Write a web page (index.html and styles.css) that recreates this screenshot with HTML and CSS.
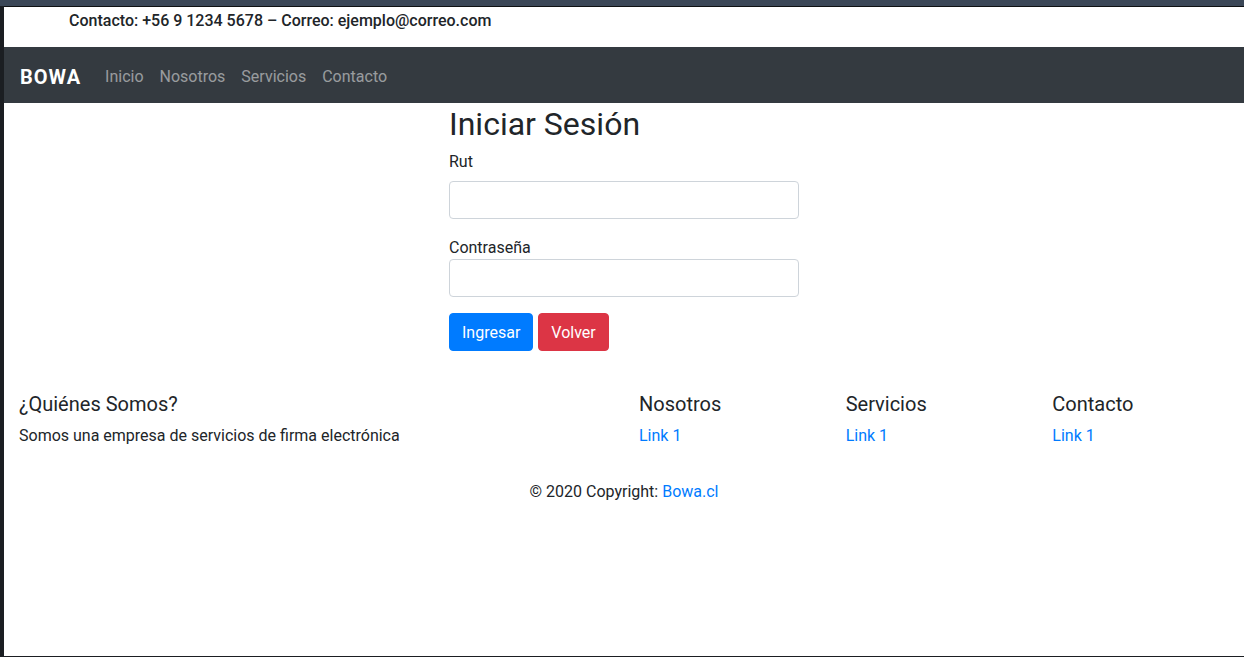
FILE: index.html
```html
<!DOCTYPE html>
<html lang="es">
<head>
    <meta charset="UTF-8">
    <meta name="viewport" content="width=device-width, initial-scale=1.0">
    <title>BOWA - Iniciar Sesión</title>
    <link rel="stylesheet" href="styles.css">
</head>
<body>
<div class="page">
    <!-- barra de contacto -->
    <div class="container">
        <p class="contact-line">Contacto: +56 9 1234 5678 – Correo: ejemplo@correo.com</p>
    </div>

    <nav class="navbar">
        <a class="navbar-brand" href="#">BOWA</a>
        <ul class="nav-list">
            <li><a class="nav-link" href="#">Inicio</a></li>
            <li><a class="nav-link" href="#">Nosotros</a></li>
            <li><a class="nav-link" href="#">Servicios</a></li>
            <li><a class="nav-link" href="#">Contacto</a></li>
        </ul>
    </nav>

    <!-- formulario -->
    <div class="container">
        <div class="row">
            <div class="login-col">
                <h2 class="login-title">Iniciar Sesión</h2>
                <form class="login-form" onsubmit="return false;">
                    <div class="form-group">
                        <label class="form-label" for="rut">Rut</label>
                        <input type="text" id="rut" class="form-control">
                    </div>
                    <label class="form-label flush" for="pass">Contraseña</label>
                    <input type="password" id="pass" class="form-control">
                    <div class="form-actions">
                        <button type="submit" class="btn btn-primary">Ingresar</button>
                        <button type="button" class="btn btn-danger">Volver</button>
                    </div>
                </form>
            </div>
        </div>
    </div>

    <!-- pie de página -->
    <footer class="page-footer">
        <div class="footer-fluid">
            <div class="row">
                <div class="col-half">
                    <h5 class="footer-title">¿Quiénes Somos?</h5>
                    <p class="footer-text">Somos una empresa de servicios de firma electrónica</p>
                </div>
                <div class="col-sixth">
                    <h5 class="footer-title">Nosotros</h5>
                    <ul class="link-list">
                        <li><a href="#">Link 1</a></li>
                    </ul>
                </div>
                <div class="col-sixth">
                    <h5 class="footer-title">Servicios</h5>
                    <ul class="link-list">
                        <li><a href="#">Link 1</a></li>
                    </ul>
                </div>
                <div class="col-sixth">
                    <h5 class="footer-title">Contacto</h5>
                    <ul class="link-list">
                        <li><a href="#">Link 1</a></li>
                    </ul>
                </div>
            </div>
        </div>
        <div class="copyright">© 2020 Copyright: <a href="#">Bowa.cl</a></div>
    </footer>
</div>
</body>
</html>
```

FILE: styles.css
```css
* { box-sizing: border-box; }
body {
    margin: 0;
    background: #1b1e22;
    border-top: 6px solid #3b4757;
    font-family: -apple-system, BlinkMacSystemFont, "Segoe UI", Roboto, "Helvetica Neue", Arial, "Noto Sans", sans-serif;
    font-size: 16px;
    line-height: 1.5;
    color: #212529;
}
a { color: #007bff; text-decoration: none; }
ul { margin: 0; padding: 0; list-style: none; }
h2, h5, p { margin: 0; }

.page {
    margin-left: 4px;
    background: #fff;
    border-top: 1px solid #0f1113;
    min-height: calc(100vh - 7px);
}
.container {
    max-width: 1140px;
    margin: 0 auto;
    padding: 0 15px;
}
.row { display: flex; margin: 0 -15px; }

/* contacto */
.contact-line {
    font-weight: 500;
    padding-top: 2px;
    margin-bottom: 14px;
}

/* navbar */
.navbar {
    background: #343a40;
    display: flex;
    align-items: center;
    padding: 8px 16px;
}
.navbar-brand {
    color: #fff;
    font-size: 20px;
    font-weight: 700;
    letter-spacing: 1px;
    line-height: 30px;
    padding: 7px 0 3px;
    margin-right: 16px;
}
.nav-list { display: flex; }
.nav-link {
    display: block;
    padding: 10px 8px 6px;
    color: rgba(255, 255, 255, 0.5);
}

/* login */
.login-col {
    flex: 0 0 33.3333%;
    max-width: 33.3333%;
    margin-left: 33.3333%;
    padding: 0 15px;
}
.login-title {
    font-size: 32px;
    font-weight: 400;
    line-height: 1.2;
    padding-top: 2px;
    margin-bottom: 6px;
}
.login-form { margin-bottom: 17px; }
.form-group { margin-bottom: 16px; }
.form-label { display: block; padding-top: 1px; margin-bottom: 7px; }
.form-label.flush { margin-bottom: -1px; }
.form-control {
    display: block;
    width: 100%;
    height: 38px;
    padding: 6px 12px;
    font: inherit;
    color: #495057;
    background: #fff;
    border: 1px solid #ced4da;
    border-radius: 4px;
}
.form-actions { margin-top: 16px; display: flex; gap: 5px; }
.btn {
    font: inherit;
    line-height: 1.5;
    padding: 7px 12px 5px;
    border: 1px solid transparent;
    border-radius: 4px;
    color: #fff;
}
.btn-primary { background: #007bff; border-color: #007bff; }
.btn-danger { background: #dc3545; border-color: #dc3545; }

/* footer */
.page-footer { padding-top: 24px; }
.footer-fluid { padding: 0 15px; }
.col-half { flex: 0 0 50%; padding: 0 15px; }
.col-sixth { flex: 0 0 16.6667%; padding: 0 15px; }
.footer-title {
    font-size: 20px;
    font-weight: 400;
    line-height: 1.2;
    margin-bottom: 8px;
}
.footer-text, .link-list { margin-bottom: 16px; }
.copyright { text-align: center; padding: 16px 0; }
```
